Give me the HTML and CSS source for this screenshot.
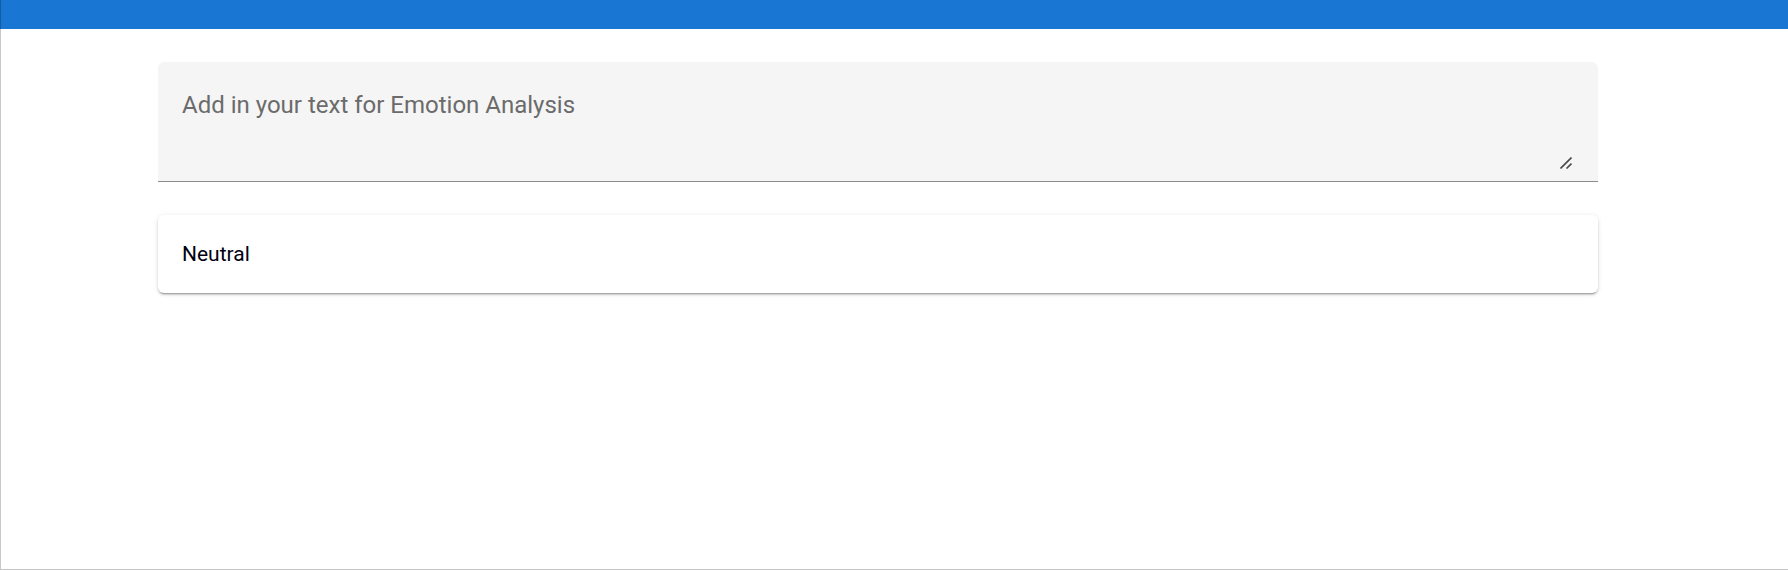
FILE: index.html
```html
<!DOCTYPE html>
<html lang="en">
<head>
<meta charset="utf-8">
<meta name="viewport" content="width=device-width, initial-scale=1">
<title>Emotion Analysis</title>
<link rel="stylesheet" href="styles.css">
</head>
<body>
<div class="page">
  <header class="app-bar"></header>
  <main class="content">
    <div class="field">
      <textarea class="field-input" rows="2" aria-label="Add in your text for Emotion Analysis" placeholder="Add in your text for Emotion Analysis"></textarea>
      <svg class="field-grip" viewBox="0 0 12 12" aria-hidden="true"><path d="M0.5 11.5 L11.5 0.5 M6.5 11.5 L11.5 6.5"/></svg>
    </div>
    <section class="card">
      <p class="card-text">Neutral</p>
    </section>
  </main>
</div>
</body>
</html>
```
FILE: styles.css
```css
* {
  box-sizing: border-box;
}

body {
  margin: 0;
  font-family: Roboto, "Liberation Sans", sans-serif;
  background: #fff;
}

.page {
  position: relative;
  min-height: 100vh;
}

/* Thin frame along the left and bottom edges, over the app bar too */
.page::after {
  content: "";
  position: absolute;
  inset: 0;
  border: solid rgba(0, 0, 0, 0.22);
  border-width: 0 0 1px 1px;
  pointer-events: none;
}

.app-bar {
  height: 29px;
  background: #1976d2;
}

.content {
  display: flex;
  flex-direction: column;
  align-items: center;
  gap: 33px;
  padding: 33px 48px 33px 16px;
}

.field,
.card {
  width: 100%;
  max-width: 1440px;
}

.field {
  position: relative;
  padding: 25px 24px 10px;
  background: #f5f5f5;
  border-bottom: 1px solid #8c8c8c;
  border-radius: 6px 6px 0 0;
}

.field-input {
  display: block;
  width: 100%;
  height: 84px;
  padding: 0;
  border: 0;
  outline: 0;
  background: transparent;
  color: rgba(0, 0, 0, 0.87);
  font: inherit;
  font-size: 24px;
  line-height: 36px;
  resize: vertical;
}

.field-input::placeholder {
  color: #6b6b6b;
  opacity: 1;
}

.field-input::-webkit-resizer {
  background: transparent;
}

.field-grip {
  position: absolute;
  right: 26px;
  bottom: 12px;
  width: 12px;
  height: 12px;
  fill: none;
  stroke: #4a4a4a;
  stroke-width: 1.6;
  pointer-events: none;
}

.card {
  padding: 24px;
  background: #fff;
  border-radius: 6px;
  box-shadow: 0 3px 1px -2px rgba(0, 0, 0, 0.2), 0 2px 2px 0 rgba(0, 0, 0, 0.14), 0 1px 5px 0 rgba(0, 0, 0, 0.12);
}

.card-text {
  margin: 0;
  color: #00000f;
  font-size: 21px;
  line-height: 30px;
}
```
